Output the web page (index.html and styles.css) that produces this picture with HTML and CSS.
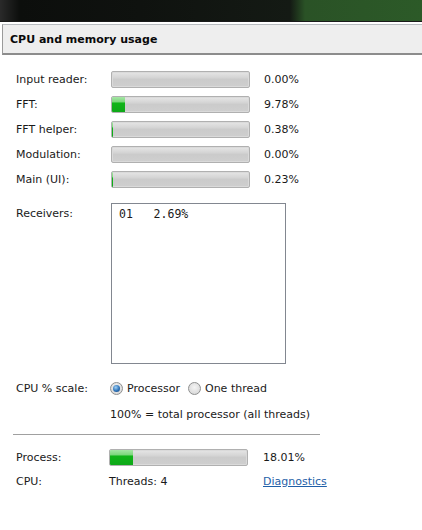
FILE: index.html
```html
<!DOCTYPE html>
<html>
<head>
<meta charset="utf-8">
<link rel="stylesheet" href="styles.css">
</head>
<body>
<div class="topstrip"></div>
<div class="header"><span class="title">CPU and memory usage</span></div>
<div class="content">
  <div class="threads">
    <div class="row"><span class="label">Input reader:</span><div class="bar"><div class="fill" style="width:0%"></div></div><span class="pct">0.00%</span></div>
    <div class="row"><span class="label">FFT:</span><div class="bar"><div class="fill" style="width:9.78%"></div></div><span class="pct">9.78%</span></div>
    <div class="row"><span class="label">FFT helper:</span><div class="bar"><div class="fill" style="width:1px"></div></div><span class="pct">0.38%</span></div>
    <div class="row"><span class="label">Modulation:</span><div class="bar"><div class="fill" style="width:0%"></div></div><span class="pct">0.00%</span></div>
    <div class="row"><span class="label">Main (UI):</span><div class="bar"><div class="fill" style="width:1px"></div></div><span class="pct">0.23%</span></div>
  </div>
  <div class="receivers">
    <span class="label rlabel">Receivers:</span>
    <div class="listbox"><div class="mono">01&nbsp;&nbsp;&nbsp;2.69%</div></div>
  </div>
  <div class="scale">
    <span class="label">CPU % scale:</span>
    <label class="radio"><span class="dot checked"></span>Processor</label>
    <label class="radio"><span class="dot"></span>One thread</label>
  </div>
  <div class="note">100% = total processor (all threads)</div>
  <div class="divider"></div>
  <div class="process">
    <div class="prow"><span class="plabel">Process:</span><div class="bar pbar"><div class="fill" style="width:17%"></div></div><span class="ppct">18.01%</span></div>
    <div class="prow"><span class="plabel">CPU:</span><span class="threadsval">Threads: 4</span><a class="link" href="#">Diagnostics</a></div>
  </div>
</div>
</body>
</html>
```
FILE: styles.css
```css
html, body {
  margin: 0;
  padding: 0;
  background: #ffffff;
}
body {
  width: 422px;
  height: 530px;
  overflow: hidden;
  font-family: "DejaVu Sans", "Liberation Sans", sans-serif;
  font-size: 11px;
  color: #1a1a1a;
}
.topstrip {
  height: 21px;
  background: linear-gradient(90deg, #2a2a2a 0px, #0c0e0c 20px, #0f120f 140px, #141a14 290px, #2a5226 305px, #2c5a28 422px);
  border-bottom: 1px solid #1a1a1a;
}
.header {
  margin-top: 2px;
  margin-left: 2px;
  height: 28px;
  border-top: 1px solid #b8bcc0;
  border-left: 1px solid #9a9a9a;
  border-bottom: 2px solid #8c8c8c;
  background: #eeeeee;
  display: flex;
  align-items: center;
  padding-left: 7px;
}
.title {
  font-weight: bold;
  font-size: 11px;
  color: #0a0a0a;
}
.content {
  padding: 12px 0 0 16px;
}
.row {
  display: grid;
  grid-template-columns: 95px 139px auto;
  align-items: center;
  height: 25px;
}
.pct {
  margin-left: 14px;
}
.bar {
  height: 15px;
  border: 1px solid #b0b0b0;
  border-radius: 2px;
  background: linear-gradient(#e6e6e6 0%, #d6d6d6 35%, #cbcbcb 50%, #cfcfcf 100%);
  box-shadow: inset 0 0 0 1px #dadada;
  overflow: hidden;
  display: flex;
}
.fill {
  height: 100%;
  background: linear-gradient(#a6e6a6 0%, #7fd87f 30%, #10b418 42%, #0ea818 100%);
}
.receivers {
  display: flex;
  margin-top: 11px;
}
.rlabel {
  width: 95px;
  padding-top: 4px;
}
.listbox {
  width: 173px;
  height: 159px;
  border: 1px solid #828790;
  background: #fff;
}
.mono {
  font-family: "DejaVu Sans Mono", "Liberation Mono", monospace;
  font-size: 11.5px;
  padding: 3px 0 0 7px;
}
.scale {
  display: flex;
  align-items: center;
  height: 20px;
  margin-top: 14px;
}
.scale .label {
  width: 94px;
}
.radio {
  display: flex;
  align-items: center;
  margin-right: 8px;
}
.dot {
  width: 11px;
  height: 11px;
  border-radius: 50%;
  border: 1px solid #8e8f8f;
  background: radial-gradient(circle at 50% 40%, #f4f4f4 0%, #dcdcdc 70%, #cfcfcf 100%);
  margin-right: 4px;
  position: relative;
}
.dot.checked::after {
  content: "";
  position: absolute;
  left: 2px;
  top: 2px;
  width: 7px;
  height: 7px;
  border-radius: 50%;
  background: radial-gradient(circle at 40% 35%, #9fd0f5 0%, #2d73b8 55%, #143e73 100%);
}
.note {
  margin: 7px 0 0 94px;
  height: 20px;
  line-height: 20px;
}
.divider {
  margin: 9px 0 0 -3px;
  width: 307px;
  height: 1px;
  background: #a0a0a0;
}
.process {
  margin-top: 10px;
}
.prow {
  display: grid;
  grid-template-columns: 93px 139px auto;
  align-items: center;
  height: 24px;
}
.ppct, .link {
  margin-left: 15px;
}
.link {
  color: #1f5fa8;
  text-decoration: underline;
}
```
